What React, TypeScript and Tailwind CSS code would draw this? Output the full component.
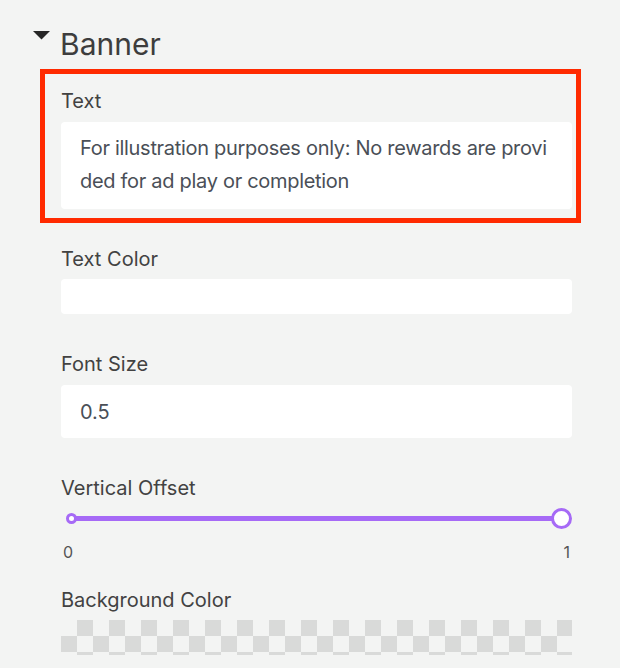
import React from 'react';

const font = { fontFamily: 'Inter, "Noto Sans", sans-serif' };

function Label({ children }: { children: React.ReactNode }) {
  return <div className="text-[20px] leading-[24px] text-[#424242]">{children}</div>;
}

export default function App() {
  return (
    <div className="min-h-screen bg-[#f3f4f3] pl-[61px] pr-[48px] pt-[26px] pb-[20px]" style={font}>
      {/* section header */}
      <div className="flex items-start -ml-[28px]">
        <svg width="17" height="9" viewBox="0 0 17 9" className="mt-[5px] shrink-0">
          <polygon points="0,0 17,0 8.5,8.5" fill="#262626" />
        </svg>
        <h2 className="ml-[10px] text-[30px] leading-[36px] text-[#3d3d3d]">Banner</h2>
      </div>

      {/* highlighted field */}
      <div className="mt-[7px] -ml-[21px] -mr-[9px] border-[5px] border-[#ff2a00] pl-[16px] pr-[4px] pt-[15px] pb-[9px]">
        <Label>Text</Label>
        <textarea
          readOnly
          rows={2}
          value="For illustration purposes only: No rewards are provided for ad play or completion"
          className="mt-[9px] block h-[87px] w-full resize-none overflow-hidden break-all rounded-[4px] bg-white px-[19px] py-[10px] text-[20px] leading-[33px] tracking-[-0.3px] text-[#4a4f57] outline-none"
          style={font}
        />
      </div>

      <div className="mt-[24px]">
        <Label>Text Color</Label>
        <div className="mt-[8px] h-[35px] rounded-[4px] bg-white" />
      </div>

      <div className="mt-[38px]">
        <Label>Font Size</Label>
        <div className="mt-[9px] flex h-[53px] items-center rounded-[4px] bg-white px-[19px] text-[20px] text-[#4a4f57]">
          0.5
        </div>
      </div>

      <div className="mt-[38px]">
        <Label>Vertical Offset</Label>
        <div className="relative mt-[8px] h-[21px]">
          <div className="absolute left-[10px] right-[11px] top-[8px] h-[5px] bg-[#a66af6]" />
          <div className="absolute left-[5px] top-[5px] h-[11px] w-[11px] rounded-full border-[3px] border-[#a66af6] bg-white" />
          <div className="absolute right-0 top-0 h-[21px] w-[21px] rounded-full border-[3px] border-[#a66af6] bg-white" />
        </div>
        <div className="mt-[13px] flex justify-between px-[2px] text-[16px] leading-[20px] text-[#555555]">
          <span>0</span>
          <span>1</span>
        </div>
      </div>

      <div className="mt-[26px]">
        <Label>Background Color</Label>
        <div className="mt-[8px] h-[35px] bg-[repeating-conic-gradient(#d9dad9_0_25%,transparent_0_50%)] bg-[length:32px_32px]" />
      </div>
    </div>
  );
}
